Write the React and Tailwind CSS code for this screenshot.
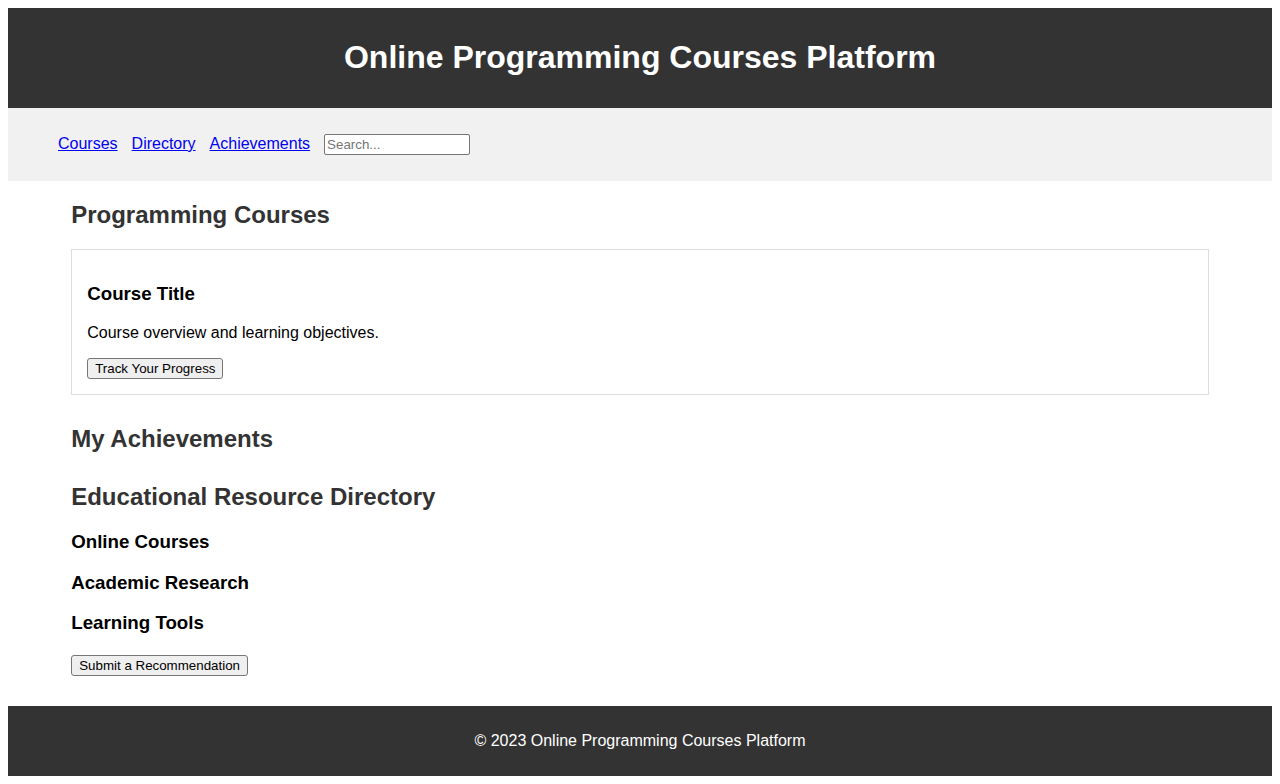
import React from "react";

function Header() {
  return (
    <header className="bg-[#333] text-white text-center py-[10px]">
      <h1 className="text-[32px] font-bold my-[21.44px]">Online Programming Courses Platform</h1>
    </header>
  );
}

function Nav() {
  const links = ["Courses", "Directory", "Achievements"];
  return (
    <nav className="bg-[#f1f1f1] p-[10px]">
      <ul className="my-4 pl-10 flex items-baseline gap-[14px] h-[21px]">
        {links.map((l) => (
          <li key={l}>
            <a href="#" className="text-[#0000ee] underline text-[16px]">
              {l}
            </a>
          </li>
        ))}
        <li>
          <input
            type="text"
            placeholder="Search..."
            className="w-[146px] h-[21px] border border-[#767676] rounded-[2px] bg-white px-[2px] text-[13.33px] text-black placeholder:text-[#757575]"
          />
        </li>
      </ul>
    </nav>
  );
}

const btn =
  "block px-[7px] py-[2px] border border-[#767676] bg-[#efefef] rounded-[3px] text-[13.33px] text-black leading-[normal]";

function App() {
  return (
    <div className="m-2 font-['Liberation_Sans',Arial,sans-serif] leading-[normal] text-black">
      <Header />
      <Nav />
      <main className="w-[90%] mx-auto">
        <section className="mb-[30px]">
          <h2 className="text-[24px] font-bold text-[#333] my-[19.92px]">Programming Courses</h2>
          <div className="border border-[#ddd] p-[15px]">
            <h3 className="text-[18.72px] font-bold my-[18.72px]">Course Title</h3>
            <p className="my-4 text-[16px]">Course overview and learning objectives.</p>
            <button className={btn}>Track Your Progress</button>
          </div>
        </section>
        <section className="mb-[30px]">
          <h2 className="text-[24px] font-bold text-[#333] my-[19.92px]">My Achievements</h2>
        </section>
        <section className="mb-[30px]">
          <h2 className="text-[24px] font-bold text-[#333] my-[19.92px]">Educational Resource Directory</h2>
          <h3 className="text-[18.72px] font-bold my-[18.72px]">Online Courses</h3>
          <h3 className="text-[18.72px] font-bold my-[18.72px]">Academic Research</h3>
          <h3 className="text-[18.72px] font-bold my-[18.72px]">Learning Tools</h3>
          <button className={btn + " mt-[20.5px]"}>Submit a Recommendation</button>
        </section>
      </main>
      <footer className="bg-[#333] text-white text-center p-[10px]">
        <p className="my-4 text-[16px]">© 2023 Online Programming Courses Platform</p>
      </footer>
    </div>
  );
}

export default App;
